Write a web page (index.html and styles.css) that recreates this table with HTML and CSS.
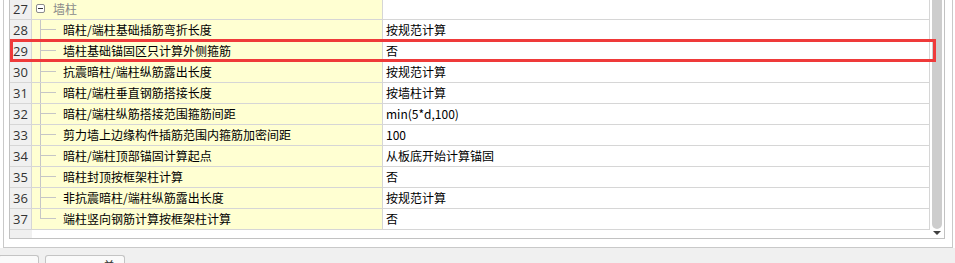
FILE: index.html
```html
<!DOCTYPE html>
<html lang="zh">
<head>
<meta charset="utf-8">
<title>属性</title>
<link rel="stylesheet" href="styles.css">
</head>
<body>
<div class="panel">
  <div class="grid">
    <div class="rows">
      <div class="row group">
        <div class="num">27</div>
        <div class="name"><span class="pad4"></span><span class="toggle"></span><span class="glabel">墙柱</span></div>
        <div class="val"></div>
      </div>
      <div class="row"><div class="num">28</div><div class="name"><span class="pad8"></span><span class="vl"></span><span class="hl"></span><span class="txt">暗柱/端柱基础插筋弯折长度</span></div><div class="val">按规范计算</div></div>
      <div class="row"><div class="num">29</div><div class="name"><span class="pad8"></span><span class="vl"></span><span class="hl"></span><span class="txt">墙柱基础锚固区只计算外侧箍筋</span></div><div class="val">否</div></div>
      <div class="row"><div class="num">30</div><div class="name"><span class="pad8"></span><span class="vl"></span><span class="hl"></span><span class="txt">抗震暗柱/端柱纵筋露出长度</span></div><div class="val">按规范计算</div></div>
      <div class="row"><div class="num">31</div><div class="name"><span class="pad8"></span><span class="vl"></span><span class="hl"></span><span class="txt">暗柱/端柱垂直钢筋搭接长度</span></div><div class="val">按墙柱计算</div></div>
      <div class="row"><div class="num">32</div><div class="name"><span class="pad8"></span><span class="vl"></span><span class="hl"></span><span class="txt">暗柱/端柱纵筋搭接范围箍筋间距</span></div><div class="val">min(5*d,100)</div></div>
      <div class="row"><div class="num">33</div><div class="name"><span class="pad8"></span><span class="vl"></span><span class="hl"></span><span class="txt">剪力墙上边缘构件插筋范围内箍筋加密间距</span></div><div class="val">100</div></div>
      <div class="row"><div class="num">34</div><div class="name"><span class="pad8"></span><span class="vl"></span><span class="hl"></span><span class="txt">暗柱/端柱顶部锚固计算起点</span></div><div class="val">从板底开始计算锚固</div></div>
      <div class="row"><div class="num">35</div><div class="name"><span class="pad8"></span><span class="vl"></span><span class="hl"></span><span class="txt">暗柱封顶按框架柱计算</span></div><div class="val">否</div></div>
      <div class="row"><div class="num">36</div><div class="name"><span class="pad8"></span><span class="vl"></span><span class="hl"></span><span class="txt">非抗震暗柱/端柱纵筋露出长度</span></div><div class="val">按规范计算</div></div>
      <div class="row"><div class="num">37</div><div class="name"><span class="pad8"></span><span class="vl last"></span><span class="hl"></span><span class="txt">端柱竖向钢筋计算按框架柱计算</span></div><div class="val">否</div></div>
      <div class="filler"><div class="fnum"></div></div>
    </div>
    <div class="vscroll">
      <div class="thumb"></div>
      <div class="arrow"></div>
    </div>
  </div>
</div>
<div class="bottombar">
  <div class="tab tab1"></div>
  <div class="tab tab2"><span class="tabtxt">单</span></div>
</div>
<div class="highlight"></div>
</body>
</html>
```

FILE: styles.css
```css
html, body {
  margin: 0;
  padding: 0;
}
body {
  position: relative;
  width: 955px;
  height: 263px;
  overflow: hidden;
  background: #ffffff;
  font-family: "Noto Sans CJK SC", "Noto Sans", sans-serif;
  font-size: 12px;
  color: #000;
}
.panel {
  margin: -10px 2px 0 3px;
  border: 1px solid #c9c9c9;
  padding: 7px 7px 8px 5px;
  background: #fff;
}
.grid {
  display: flex;
  border: 1px solid #c2c2c2;
}
.rows {
  width: 920px;
  display: flex;
  flex-direction: column;
}
.row {
  display: grid;
  grid-template-columns: 22px 351px 547px;
  height: 21px;
}
.row > div {
  border-bottom: 1px solid #d6d6d6;
  border-right: 1px solid #d6d6d6;
  height: 20px;
  line-height: 20px;
  white-space: nowrap;
  overflow: hidden;
}
.num {
  background: #f0f0f0;
  color: #333;
  text-align: center;
  font-family: "Open Sans", "Noto Sans", sans-serif;
  font-size: 13px;
}
.name {
  background: #ffffd2;
  display: flex;
  align-items: stretch;
}
.val {
  background: #fff;
  padding-left: 3px;
}
.pad4 { width: 4px; flex: none; }
.pad8 { width: 8px; flex: none; }
.toggle {
  flex: none;
  width: 9px;
  height: 9px;
  box-sizing: border-box;
  border: 1px solid #8c8c8c;
  border-radius: 2px;
  background: #fff;
  align-self: center;
  margin-top: -1px;
  display: flex;
  align-items: center;
  justify-content: center;
}
.toggle::before {
  content: "";
  width: 5px;
  height: 1px;
  background: #333;
}
.glabel {
  margin-left: 8px;
  color: #8a8a8a;
}
.vl {
  flex: none;
  width: 1px;
  background: #c6c6c6;
}
.vl.last {
  height: 10px;
}
.hl {
  flex: none;
  width: 15px;
  height: 1px;
  background: #c6c6c6;
  align-self: flex-start;
  margin-top: 9px;
}
.txt {
  margin-left: 7px;
}
.filler {
  height: 8px;
  display: flex;
}
.fnum {
  width: 22px;
  background: #f0f0f0;
}
.vscroll {
  width: 14px;
  display: flex;
  flex-direction: column;
  align-items: flex-start;
}
.thumb {
  margin-left: 2px;
  width: 10px;
  height: 230px;
  background: #cdcdcd;
  border-radius: 0 0 5px 5px;
}
.arrow {
  margin: 2px 0 0 3px;
  width: 0;
  height: 0;
  border-left: 4px solid transparent;
  border-right: 4px solid transparent;
  border-top: 4px solid #404040;
}
.bottombar {
  height: 15px;
  background: #f0f0f0;
  display: flex;
  align-items: flex-start;
  padding-top: 7px;
  overflow: hidden;
}
.tab {
  height: 14px;
  box-sizing: border-box;
  border: 1px solid #c4c4c4;
  border-bottom: none;
  border-radius: 3px 3px 0 0;
  background: #fafafa;
  flex: none;
}
.tab1 {
  width: 41px;
  margin-left: -2px;
}
.tab2 {
  width: 80px;
  margin-left: 6px;
  padding: 2px 0 0 57px;
  line-height: 16px;
  color: #333;
}
.highlight {
  position: absolute;
  left: 10px;
  top: 39px;
  width: 926px;
  height: 23px;
  box-sizing: border-box;
  border: 3px solid #ef3a3a;
}
```
